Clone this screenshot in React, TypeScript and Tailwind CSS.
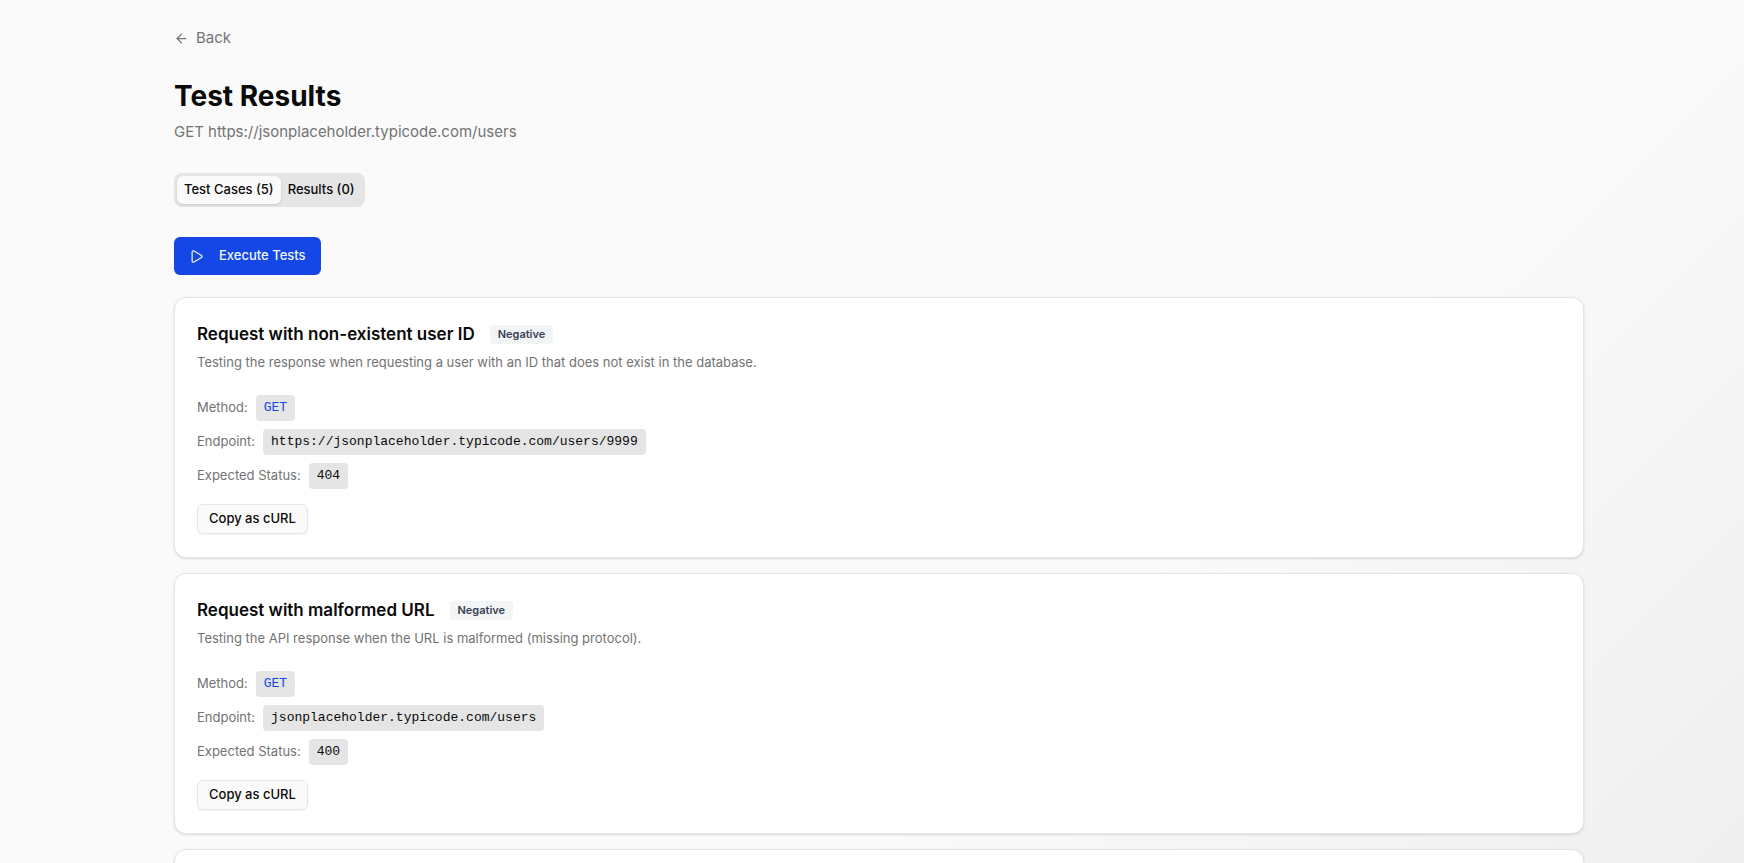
import { useState } from "react";
import { ArrowLeft, Play } from "lucide-react";

type TestCase = {
  name: string;
  kind: string;
  description: string;
  method: string;
  endpoint: string;
  status: number;
};

const cases: TestCase[] = [
  {
    name: "Request with non-existent user ID",
    kind: "Negative",
    description:
      "Testing the response when requesting a user with an ID that does not exist in the database.",
    method: "GET",
    endpoint: "https://jsonplaceholder.typicode.com/users/9999",
    status: 404,
  },
  {
    name: "Request with malformed URL",
    kind: "Negative",
    description: "Testing the API response when the URL is malformed (missing protocol).",
    method: "GET",
    endpoint: "jsonplaceholder.typicode.com/users",
    status: 400,
  },
];

function Field({ label, value, accent = false }: { label: string; value: string; accent?: boolean }) {
  return (
    <div className="flex items-center gap-2">
      <dt className="text-[#737373]">{label}</dt>
      <dd
        className={`rounded bg-[#e5e5e5] px-2 py-[3px] font-['Liberation_Mono',monospace] leading-5 ${
          accent ? "text-[#1447e6]" : "text-[#0a0a0a]"
        }`}
      >
        {value}
      </dd>
    </div>
  );
}

function TestCaseCard({ test }: { test: TestCase }) {
  return (
    <article className="rounded-xl border border-[#e5e5e5] bg-white px-[22px] pt-6 pb-[23px] shadow-sm">
      <div className="flex items-center gap-[15px]">
        <h2 className="text-[17px] leading-6 font-semibold">{test.name}</h2>
        <span className="rounded bg-[#f3f4f6] px-2 text-[11px] leading-[19px] font-semibold text-[#364153]">
          {test.kind}
        </span>
      </div>
      <p className="mt-1 text-[13px] leading-6 text-[#737373]">{test.description}</p>
      <dl className="mt-[21px] flex flex-col gap-2 text-[13px]">
        <Field label="Method:" value={test.method} accent />
        <Field label="Endpoint:" value={test.endpoint} />
        <Field label="Expected Status:" value={String(test.status)} />
      </dl>
      <button
        type="button"
        className="mt-[15px] flex h-[30px] items-center rounded-md border border-[#e5e5e5] bg-[#fafafa] px-[11px] text-[13px] font-medium shadow-xs"
      >
        Copy as cURL
      </button>
    </article>
  );
}

export default function App() {
  const [tab, setTab] = useState("cases");
  const tabs = [
    { id: "cases", label: "Test Cases (5)" },
    { id: "results", label: "Results (0)" },
  ];
  return (
    <div className="h-screen overflow-hidden bg-linear-135 from-[#fafafa] from-66% to-[#efefef] font-['Inter',sans-serif] text-[#0a0a0a]">
      <main className="pt-[27px] pr-[160px] pl-[174px]">
        <a href="#back" className="flex w-fit items-center gap-[7px] text-[15px] leading-[22px] text-[#737373]">
          <ArrowLeft size={15} aria-hidden="true" />
          Back
        </a>
        <h1 className="mt-[30px] text-[28px] leading-[34px] font-bold">Test Results</h1>
        <p className="mt-2 text-[15px] leading-[22px] text-[#737373]">
          GET https://jsonplaceholder.typicode.com/users
        </p>
        <div role="tablist" className="mt-[30px] flex h-[34px] w-fit rounded-lg bg-[#e5e5e5] p-[3px]">
          {tabs.map((t) => (
            <button
              key={t.id}
              type="button"
              role="tab"
              aria-selected={tab === t.id}
              onClick={() => setTab(t.id)}
              className={`flex items-center rounded-md px-[7px] text-[13px] font-medium ${
                tab === t.id ? "bg-[#fafafa] shadow-sm" : ""
              }`}
            >
              {t.label}
            </button>
          ))}
        </div>
        <button
          type="button"
          className="mt-[30px] flex h-[38px] items-center gap-[15px] rounded-md bg-[#1447e6] px-[15px] text-[13px] font-medium text-[#eff6ff]"
        >
          <Play size={15} aria-hidden="true" />
          Execute Tests
        </button>
        <div className="mt-[22px] flex flex-col gap-[15px]">
          {cases.map((c) => (
            <TestCaseCard key={c.name} test={c} />
          ))}
          <div className="min-h-[261px] rounded-xl border border-[#e5e5e5] bg-white shadow-sm" />
        </div>
      </main>
    </div>
  );
}
